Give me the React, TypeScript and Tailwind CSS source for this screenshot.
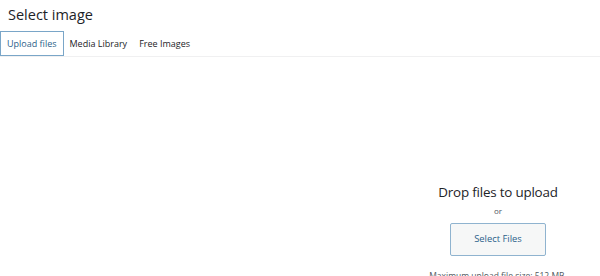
export default function App() {
  return (
    <div
      className="w-[600px] h-[276px] overflow-hidden bg-white text-[#1d2327]"
      style={{ fontFamily: '"Open Sans", "Noto Sans", sans-serif' }}
    >
      {/* Judul modal */}
      <h1 className="pl-[8px] pt-[5px] h-[31px] text-[14.5px] leading-[20px] font-normal">Select image</h1>

      {/* Tab navigasi */}
      <div className="flex items-stretch h-[26px] border-b border-[#f0f0f1]">
        <button className="px-[6px] border border-[#7aa6c8] bg-white text-[9px] text-[#2c5f8a]">
          Upload files
        </button>
        <button className="px-[6px] text-[9px] text-[#1d2327]">Media Library</button>
        <button className="px-[6px] text-[9px] text-[#1d2327]">Free Images</button>
      </div>

      {/* Area drop file */}
      <div className="flex pt-[126px] pl-[398px]">
        <div className="w-[200px] flex flex-col items-center">
          <p className="text-[13.4px] leading-[18px] text-[#1d2327] tracking-[-0.2px]">Drop files to upload</p>
          <p className="mt-[5px] text-[8px] leading-[10px] text-[#50575e]">or</p>
          <button className="mt-[7px] w-[96px] h-[33px] rounded-[2px] border border-[#8fb3cf] bg-[#f6f7f7] text-[9.4px] text-[#2c5f8a]">
            Select Files
          </button>
          <p className="mt-[14px] text-[8.5px] leading-[12px] text-[#50575e] whitespace-nowrap">
            Maximum upload file size: 512 MB.
          </p>
        </div>
      </div>
    </div>
  );
}
